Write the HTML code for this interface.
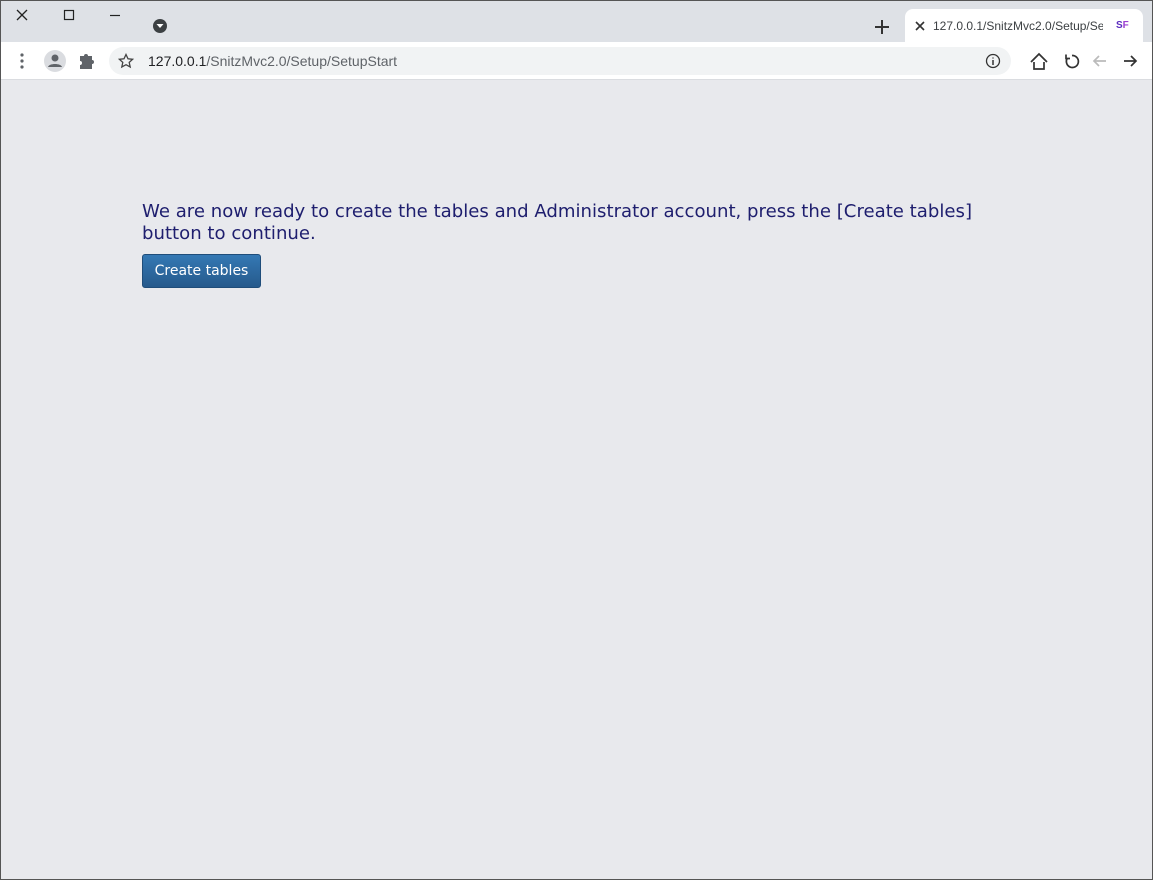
<!DOCTYPE html>
<html><head><meta charset="utf-8"><style>
*{margin:0;padding:0;box-sizing:border-box}
html,body{width:1153px;height:880px;overflow:hidden}
body{background:#e8e9ed;font-family:"Liberation Sans",sans-serif;position:relative;}
.frame{position:absolute;left:0;top:0;width:1153px;height:880px;border:1px solid #555;pointer-events:none;z-index:5}
.tabbar{position:absolute;left:0;top:0;width:1153px;height:42px;background:#dee1e6;}
.tab{position:absolute;left:905px;top:9px;width:238px;height:34px;background:#fff;border-radius:8px 8px 0 0}
.toolbar{position:absolute;left:0;top:42px;width:1153px;height:38px;background:#fff;border-bottom:1px solid #dadce0}
.omni{position:absolute;left:109px;top:5px;width:902px;height:28px;background:#f1f3f4;border-radius:14px}
.url{position:absolute;left:148px;top:11px;font-size:14px;color:#5f6368}
.url b{font-weight:normal;color:#202124}
.content{position:absolute;left:142px;top:201px;font-family:"DejaVu Sans",Verdana,sans-serif;font-size:18.1px;line-height:22px;color:#1e1e6e;width:845px}
.btn{position:absolute;left:142px;top:254px;width:119px;height:34px;border-radius:3px;background:linear-gradient(#3478b4,#265a8c);border:1px solid #1f4d7a;color:#fff;font-family:"DejaVu Sans",Verdana,sans-serif;font-size:14px;line-height:33px;text-align:center}
</style></head><body>
<div class="frame"></div>
<div class="tabbar">
<svg style="position:absolute;left:0;top:1px" width="180" height="42">
<path d="M17 9l10 10M27 9l-10 10" stroke="#222" stroke-width="1.3"/>
<rect x="64.5" y="9.5" width="9" height="9" fill="none" stroke="#222" stroke-width="1.2"/>
<path d="M110 14.5h10" stroke="#222" stroke-width="1.2"/>
<circle cx="160" cy="25" r="7" fill="#3c4043"/><path d="M156.5 23h7l-3.5 4z" fill="#fff"/>
</svg>
<svg style="position:absolute;left:872px;top:17px" width="20" height="20"><path d="M10 3v14M3 10h14" stroke="#333" stroke-width="2"/></svg>
<div class="tab">
<svg style="position:absolute;left:9px;top:11px" width="12" height="12"><path d="M2 2l8 8M10 2l-8 8" stroke="#333" stroke-width="1.6"/></svg>
<div style="position:absolute;left:28px;top:10px;font-size:12px;color:#3c4043;width:170px;overflow:hidden;white-space:nowrap">127.0.0.1/SnitzMvc2.0/Setup/Setup</div>
<div style="position:absolute;left:211px;top:11px;font-size:10px;font-weight:bold;color:#5b2bbf">S<span style="color:#9b3fd0">F</span></div>
</div>
</div>
<div class="toolbar">
<svg style="position:absolute;left:0;top:0" width="110" height="38">
<circle cx="22" cy="13" r="1.6" fill="#5f6368"/><circle cx="22" cy="19" r="1.6" fill="#5f6368"/><circle cx="22" cy="25" r="1.6" fill="#5f6368"/>
<circle cx="55" cy="19" r="11" fill="#dadce0"/><circle cx="55" cy="16" r="3.5" fill="#5f6368"/><path d="M48 25c1-4 13-4 14 0z" fill="#5f6368"/>
<path d="M80 14h4a2 2 0 0 1 4 0h4v4a2 2 0 0 1 0 4v5h-12v-4a2 2 0 0 0 0-4z" fill="#5f6368"/>
</svg>
<div class="omni">
<svg style="position:absolute;left:9px;top:6px" width="16" height="16"><path d="M8 1.5l2 4.3 4.6.5-3.4 3.1 1 4.6L8 11.7 3.8 14l1-4.6L1.4 6.3 6 5.8z" fill="none" stroke="#444" stroke-width="1.3"/></svg>
<svg style="position:absolute;left:876px;top:6px" width="16" height="16"><circle cx="8" cy="8" r="6.5" fill="none" stroke="#333" stroke-width="1.3"/><path d="M8 7v5M8 4.5v1" stroke="#333" stroke-width="1.5"/></svg>
</div>
<div class="url"><b>127.0.0.1</b>/SnitzMvc2.0/Setup/SetupStart</div>
<svg style="position:absolute;left:1020px;top:0" width="133" height="38">
<path d="M14 20v7h10v-7M11 20l8-8 8 8" fill="none" stroke="#333" stroke-width="1.7"/>
<path d="M52 13.5a6 6 0 1 1-4.5 2.5M46 12.5v4h4" fill="none" stroke="#333" stroke-width="1.7"/>
<path d="M86 19h-12M79 14l-5 5 5 5" fill="none" stroke="#bbb" stroke-width="1.7"/>
<path d="M104 19h12M111 14l5 5-5 5" fill="none" stroke="#333" stroke-width="1.7"/>
</svg>
</div>
<div class="content">We are now ready to create the tables and Administrator account, press the [Create tables] button to continue.</div>
<div class="btn">Create tables</div>
</body></html>
